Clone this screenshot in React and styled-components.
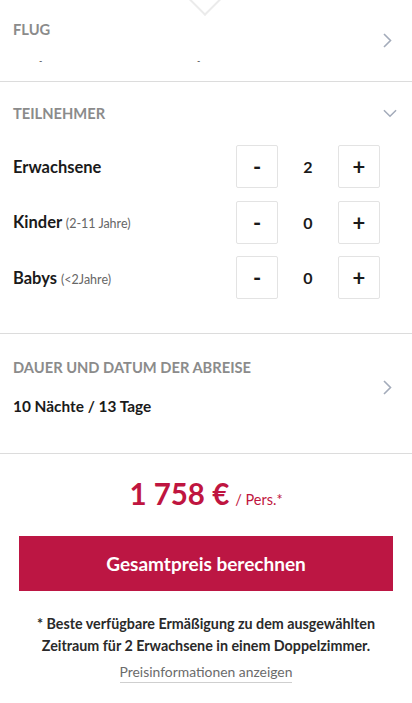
import React from "react";
import styled, { createGlobalStyle } from "styled-components";

const Global = createGlobalStyle`
  html, body { margin: 0; padding: 0; background: #fff; }
  body { font-family: Lato, "Open Sans", sans-serif; color: #1a1a1a; }
  * { box-sizing: border-box; }
`;

const Page = styled.div`
  position: relative;
  width: 412px;
  overflow: hidden;
  background: #fff;
`;

const Notch = styled.div`
  position: absolute;
  left: 193px;
  top: -13px;
  width: 24px;
  height: 24px;
  background: #fff;
  border-right: 2px solid #ebebeb;
  border-bottom: 2px solid #ebebeb;
  transform: rotate(45deg);
`;

const Section = styled.section`
  display: flex;
  align-items: ${(p) => p.$align || "center"};
  padding: ${(p) => p.$pad};
  border-bottom: 1px solid #dcdcdc;
`;

const Body = styled.div`
  flex: 1;
  display: flex;
  flex-direction: column;
`;

const Title = styled.h2`
  margin: 0;
  font-size: 14.7px;
  line-height: 18px;
  font-weight: 700;
  color: #8b8b8b;
  text-transform: uppercase;
`;

const Dashes = styled.div`
  display: grid;
  grid-template-columns: 158px 1fr;
  margin-top: 17px;
  padding-left: 26px;
  font-size: 9px;
  line-height: 12px;
  color: #444;
`;

const Value = styled.div`
  margin-top: ${(p) => p.$mt || 0}px;
  font-size: 15.4px;
  line-height: 20px;
  font-weight: 700;
  color: #1a1a1a;
`;

const ChevronBox = styled.div`
  width: 14px;
  display: flex;
  justify-content: center;
  margin: ${(p) => p.$m || "0"};
`;

const HeadRow = styled.div`
  display: flex;
  align-items: center;
  justify-content: space-between;
`;

const Rows = styled.div`
  display: flex;
  flex-direction: column;
  gap: 12.5px;
  margin-top: 23px;
  padding-right: 17px;
`;

const Row = styled.div`
  display: flex;
  align-items: center;
  justify-content: space-between;
  height: 43px;
`;

const Label = styled.div`
  font-size: 16.5px;
  font-weight: 700;
  color: #1a1a1a;
`;

const Hint = styled.span`
  font-size: 12.5px;
  font-weight: 400;
  color: #666;
`;

const Counter = styled.div`
  display: flex;
  align-items: center;
`;

const StepButton = styled.button`
  width: 42px;
  height: 43px;
  border: 1px solid #e3e3e3;
  border-radius: 2px;
  background: #fff;
  padding: 0;
  font-family: inherit;
  font-size: 22px;
  font-weight: 700;
  color: #1a1a1a;
  display: flex;
  align-items: center;
  justify-content: center;
`;

const Count = styled.span`
  width: 60px;
  text-align: center;
  font-size: 16px;
  font-weight: 700;
`;

const PriceArea = styled.div`
  display: flex;
  flex-direction: column;
  align-items: center;
  padding: 20px 19px 20px;
`;

const Price = styled.div`
  line-height: 40px;
  color: #bf1540;
`;

const Amount = styled.span`
  font-size: 29.5px;
  font-weight: 700;
`;

const PerPerson = styled.span`
  font-size: 14.5px;
  margin-left: 6px;
`;

const CTA = styled.button`
  margin-top: 16px;
  width: 100%;
  height: 55px;
  border: none;
  background: #bc1643;
  color: #fff;
  font-family: inherit;
  font-size: 19px;
  font-weight: 700;
`;

const Note = styled.p`
  margin: 22px 0 0;
  text-align: center;
  font-size: 14.3px;
  line-height: 22px;
  font-weight: 700;
  color: #2a2a2a;
`;

const InfoLink = styled.a`
  margin-top: 6px;
  font-size: 13.9px;
  line-height: 18px;
  color: #6b6b6b;
  text-decoration: none;
  border-bottom: 1px solid #cfcfcf;
  padding-bottom: 1px;
`;

const ChevronRight = () => (
  <svg width="9" height="15" viewBox="0 0 9 15">
    <path d="M1 1 L7.5 7.5 L1 14" fill="none" stroke="#a3abba" strokeWidth="1.6" />
  </svg>
);

const ChevronDown = () => (
  <svg width="15" height="9" viewBox="0 0 15 9">
    <path d="M1 1 L7.5 7.5 L14 1" fill="none" stroke="#a3abba" strokeWidth="1.6" />
  </svg>
);

const travellers = [
  { label: "Erwachsene", hint: null, count: 2 },
  { label: "Kinder", hint: "(2-11 Jahre)", count: 0 },
  { label: "Babys", hint: "(<2Jahre)", count: 0 },
];

export default function App() {
  return (
    <Page>
      <Global />
      <Notch />
      <Section $pad="20px 18px 14px 13px">
        <Body>
          <Title>Flug</Title>
          <Dashes>
            <span>-</span>
            <span>-</span>
          </Dashes>
        </Body>
        <ChevronBox $m="0 0 6px 0">
          <ChevronRight />
        </ChevronBox>
      </Section>

      <Section $pad="22px 15px 34px 13px" $align="stretch">
        <Body>
          <HeadRow>
            <Title>Teilnehmer</Title>
            <ChevronBox>
              <ChevronDown />
            </ChevronBox>
          </HeadRow>
          <Rows>
            {travellers.map((t) => (
              <Row key={t.label}>
                <Label>
                  {t.label} {t.hint && <Hint>{t.hint}</Hint>}
                </Label>
                <Counter>
                  <StepButton>-</StepButton>
                  <Count>{t.count}</Count>
                  <StepButton>+</StepButton>
                </Counter>
              </Row>
            ))}
          </Rows>
        </Body>
      </Section>

      <Section $pad="24px 18px 37px 13px">
        <Body>
          <Title>Dauer und Datum der Abreise</Title>
          <Value $mt={20}>10 Nächte / 13 Tage</Value>
        </Body>
        <ChevronBox>
          <ChevronRight />
        </ChevronBox>
      </Section>

      <PriceArea>
        <Price>
          <Amount>1 758 €</Amount>
          <PerPerson>/ Pers.*</PerPerson>
        </Price>
        <CTA>Gesamtpreis berechnen</CTA>
        <Note>
          * Beste verfügbare Ermäßigung zu dem ausgewählten
          <br />
          Zeitraum für 2 Erwachsene in einem Doppelzimmer.
        </Note>
        <InfoLink href="#">Preisinformationen anzeigen</InfoLink>
      </PriceArea>
    </Page>
  );
}
